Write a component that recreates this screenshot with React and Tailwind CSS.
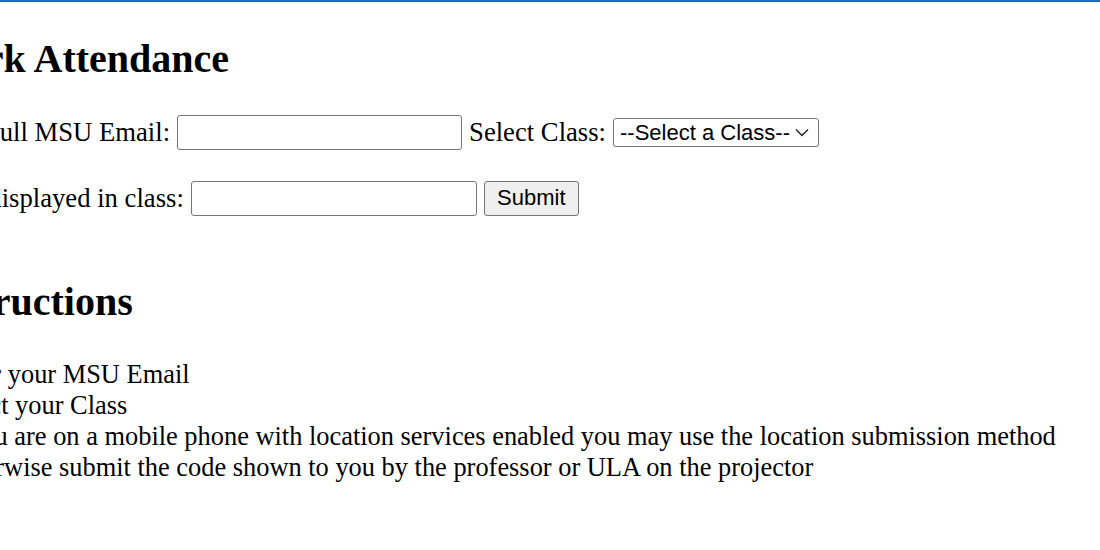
import { useState } from "react";

const serif = "font-['Liberation_Serif','Times_New_Roman',serif]";
const sans = "font-['Liberation_Sans',Arial,sans-serif]";

export default function App() {
  const [email, setEmail] = useState("");
  const [code, setCode] = useState("");
  const [course, setCourse] = useState("");

  return (
    <div className={`min-h-[550px] w-full overflow-hidden bg-white text-black ${serif}`}>
      {/* top accent line */}
      <div className="h-[2px] w-full bg-[#1e6cc0]" />

      <h2 className="-ml-[72px] mt-[35px] whitespace-nowrap text-[40px] font-bold leading-[44px]">
        Mark Attendance
      </h2>

      {/* attendance form */}
      <form
        className="-ml-[135px] mt-[34px] flex flex-col gap-[31px] whitespace-nowrap text-[26.67px] leading-[30.7px]"
        onSubmit={(e) => e.preventDefault()}
      >
        <div className="flex h-[35px] items-center gap-[7px]">
          <label>Enter your Full MSU Email:</label>
          <input
            type="text"
            value={email}
            onChange={(e) => setEmail(e.target.value)}
            className="h-[35px] w-[285px] shrink-0 rounded-[3px] border border-[#767676] bg-white"
          />
          <label>Select Class:</label>
          <div className="-mt-[1px] flex h-[29px] w-[206px] shrink-0 items-center rounded-[3px] border border-[#767676] bg-white">
            <select
              value={course}
              onChange={(e) => setCourse(e.target.value)}
              className={`h-full flex-1 appearance-none bg-transparent pl-[6px] text-[22px] leading-[25px] outline-none ${sans}`}
            >
              <option value="">--Select a Class--</option>
            </select>
            <svg
              className="pointer-events-none mr-[9px] h-[9px] w-[14px]"
              viewBox="0 0 14 9"
              fill="none"
              stroke="#222"
              strokeWidth="1.4"
            >
              <path d="M1 1.5 L7 7.5 L13 1.5" />
            </svg>
          </div>
        </div>

        <div className="ml-[2px] flex h-[35px] items-center gap-[7px]">
          <label>Enter code displayed in class:</label>
          <input
            type="text"
            value={code}
            onChange={(e) => setCode(e.target.value)}
            className="h-[35px] w-[286px] shrink-0 rounded-[3px] border border-[#767676] bg-white"
          />
          <button
            type="submit"
            className={`h-[35px] w-[95px] shrink-0 rounded-[3px] border border-[#767676] bg-[#efefef] text-[22px] ${sans}`}
          >
            Submit
          </button>
        </div>
      </form>

      <h2 className="-ml-[74px] mt-[64px] whitespace-nowrap text-[40px] font-bold leading-[44px]">
        Instructions
      </h2>

      <ul className="-ml-[56px] mt-[35px] whitespace-nowrap text-[26.4px] leading-[31px]">
        <li>Enter your MSU Email</li>
        <li>Select your Class</li>
        <li>If you are on a mobile phone with location services enabled you may use the location submission method</li>
        <li>Otherwise submit the code shown to you by the professor or ULA on the projector</li>
      </ul>
    </div>
  );
}
